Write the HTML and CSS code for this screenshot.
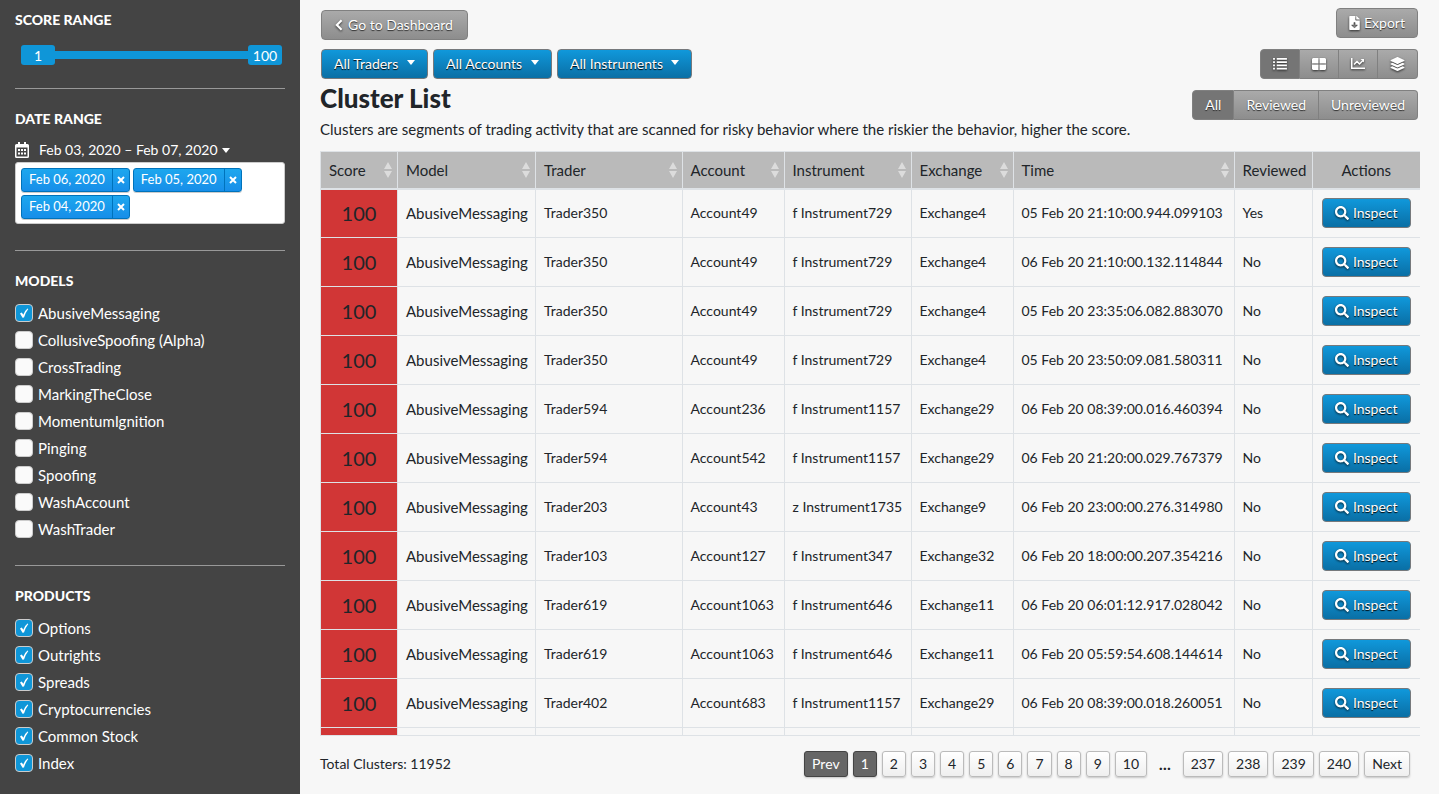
FILE: index.html
```html
<!DOCTYPE html>
<html lang="en">
<head>
<meta charset="utf-8">
<title>Cluster List</title>
<link rel="stylesheet" href="styles.css">
</head>
<body>
<svg class="sprite" aria-hidden="true">
  <symbol id="search" viewBox="0 0 512 512"><path d="M505 442.700L405.300 343c-4.500-4.500-10.600-7-17-7H372c27.600-35.300 44-79.700 44-128C416 93.100 322.900 0 208 0S0 93.100 0 208s93.100 208 208 208c48.300 0 92.700-16.400 128-44v16.300c0 6.400 2.500 12.500 7 17l99.700 99.700c9.400 9.400 24.600 9.400 33.900 0l28.300-28.300c9.400-9.400 9.400-24.600.1-34zM208 336c-70.700 0-128-57.200-128-128 0-70.700 57.200-128 128-128 70.700 0 128 57.200 128 128 0 70.700-57.200 128-128 128z"/></symbol>
  <symbol id="sort" viewBox="0 0 10 16"><path d="M5 0l4 7H1zM5 16l4-7H1z"/></symbol>
</svg>
<div class="app">
  <aside class="sidebar">
    <section class="block">
      <h2 class="block-title">Score Range</h2>
      <div class="slider">
        <input class="range" type="range" min="1" max="100" value="1" aria-label="Minimum score">
        <input class="range range-max" type="range" min="1" max="100" value="100" aria-label="Maximum score">
        <div class="range-values"><output>1</output><output>100</output></div>
      </div>
    </section>
    <section class="block">
      <h2 class="block-title">Date Range</h2>
      <button class="date-button" type="button">
        <svg class="calendar" viewBox="0 0 14 16"><path fill-rule="evenodd" d="M3 0h2v2h4V0h2v2h1.500A1.500 1.500 0 0 1 14 3.500v11a1.500 1.500 0 0 1-1.500 1.500h-11A1.500 1.500 0 0 1 0 14.500v-11A1.500 1.500 0 0 1 1.500 2H3zM1.500 5.500v9h11v-9z"/><path d="M3 7h2v2H3zM6 7h2v2H6zM9 7h2v2H9zM3 10.500h2v2H3zM6 10.500h2v2H6zM9 10.500h2v2H9z"/></svg>
        <span>Feb 03, 2020 – Feb 07, 2020</span><i class="caret"></i>
      </button>
      <div class="tags">
        <span class="tag"><span class="tag-text">Feb 06, 2020</span><button class="tag-remove" type="button" aria-label="Remove Feb 06, 2020"><svg viewBox="0 0 8 8"><path d="M1 1l6 6M7 1L1 7"/></svg></button></span>
        <span class="tag"><span class="tag-text">Feb 05, 2020</span><button class="tag-remove" type="button" aria-label="Remove Feb 05, 2020"><svg viewBox="0 0 8 8"><path d="M1 1l6 6M7 1L1 7"/></svg></button></span>
        <span class="tag"><span class="tag-text">Feb 04, 2020</span><button class="tag-remove" type="button" aria-label="Remove Feb 04, 2020"><svg viewBox="0 0 8 8"><path d="M1 1l6 6M7 1L1 7"/></svg></button></span>
      </div>
    </section>
    <section class="block">
      <h2 class="block-title">Models</h2>
      <div class="checks">
        <label class="check"><input type="checkbox" checked><span>AbusiveMessaging</span></label>
        <label class="check"><input type="checkbox"><span>CollusiveSpoofing (Alpha)</span></label>
        <label class="check"><input type="checkbox"><span>CrossTrading</span></label>
        <label class="check"><input type="checkbox"><span>MarkingTheClose</span></label>
        <label class="check"><input type="checkbox"><span>MomentumIgnition</span></label>
        <label class="check"><input type="checkbox"><span>Pinging</span></label>
        <label class="check"><input type="checkbox"><span>Spoofing</span></label>
        <label class="check"><input type="checkbox"><span>WashAccount</span></label>
        <label class="check"><input type="checkbox"><span>WashTrader</span></label>
      </div>
    </section>
    <section class="block">
      <h2 class="block-title">Products</h2>
      <div class="checks">
        <label class="check"><input type="checkbox" checked><span>Options</span></label>
        <label class="check"><input type="checkbox" checked><span>Outrights</span></label>
        <label class="check"><input type="checkbox" checked><span>Spreads</span></label>
        <label class="check"><input type="checkbox" checked><span>Cryptocurrencies</span></label>
        <label class="check"><input type="checkbox" checked><span>Common Stock</span></label>
        <label class="check"><input type="checkbox" checked><span>Index</span></label>
      </div>
    </section>
  </aside>
  <main class="main">
    <header class="toolbar">
      <div class="toolbar-left">
        <button class="btn gray back" type="button"><svg class="chevron" viewBox="0 0 9 14"><path d="M7.500 1.500L2 7l5.500 5.500"/></svg>Go to Dashboard</button>
        <div class="filters">
          <span class="select"><select class="btn blue" aria-label="Traders"><option>All Traders</option></select><i class="caret"></i></span>
          <span class="select"><select class="btn blue" aria-label="Accounts"><option>All Accounts</option></select><i class="caret"></i></span>
          <span class="select"><select class="btn blue" aria-label="Instruments"><option>All Instruments</option></select><i class="caret"></i></span>
        </div>
        <h1 class="title">Cluster List</h1>
      </div>
      <div class="toolbar-right">
        <button class="btn gray export" type="button"><svg class="file" viewBox="0 0 384 512"><path fill-rule="evenodd" d="M224 136V0H24C10.700 0 0 10.700 0 24v464c0 13.300 10.700 24 24 24h336c13.300 0 24-10.700 24-24V160H248c-13.200 0-24-10.800-24-24zm76.500 211.400l-96.400 95.700c-6.700 6.600-17.400 6.600-24 0l-96.400-95.700C73.400 337.300 80.500 320 94.800 320H160v-80c0-8.800 7.200-16 16-16h32c8.800 0 16 7.200 16 16v80h65.200c14.300 0 21.400 17.300 11.300 27.400zM377 105L279.100 7c-4.500-4.500-10.600-7-17-7H256v128h128v-6.100c0-6.300-2.500-12.400-7-16.900z"/></svg>Export</button>
        <div class="group">
          <button class="btn gray icon active" type="button" aria-label="List"><svg viewBox="0 0 15 13"><path d="M0 0h2v2H0zM4 0h11v2H4zM0 3.500h2v2H0zM4 3.500h11v2H4zM0 7h2v2H0zM4 7h11v2H4zM0 10.500h2v2H0zM4 10.500h11v2H4z"/></svg></button>
          <button class="btn gray icon" type="button" aria-label="Grid"><svg viewBox="0 0 14 12"><path d="M1 0h5.500v5.500H0V1zM7.500 0H13l1 1v4.500H7.500zM0 6.500h6.500V12H1l-1-1zM7.500 6.500H14V11l-1 1H7.500z"/></svg></button>
          <button class="btn gray icon" type="button" aria-label="Chart"><svg viewBox="0 0 14 12"><path d="M0 0h1.500v9.500H14V11H0z"/><path class="line" d="M3 6.500l3-3 2.500 2.500 3.200-3.200"/><path d="M9.500 1H13v3.500z"/></svg></button>
          <button class="btn gray icon" type="button" aria-label="Layers"><svg class="layers" viewBox="0 0 512 512"><path d="M12.400 148l232.900 105.700c6.800 3.100 14.500 3.100 21.300 0L499.600 148c16.600-7.500 16.600-32.500 0-40L266.700 2.300c-6.800-3.100-14.500-3.100-21.300 0L12.400 108c-16.600 7.500-16.600 32.500 0 40zm487.200 88.300l-58.100-26.300-161.600 73.300c-15.400 6.900-32.100 6.900-47.500 0L70.500 210l-58.100 26.300c-16.500 7.500-16.500 32.500 0 40l232.900 105.600c6.800 3.100 14.500 3.100 21.300 0l233-105.600c16.500-7.500 16.500-32.500 0-40zm0 127.800l-57.900-26.200-161.800 73.400c-15.400 6.900-32.100 6.900-47.500 0L70.300 337.900l-57.900 26.200c-16.500 7.500-16.500 32.500 0 40l232.900 105.600c6.800 3.100 14.500 3.100 21.300 0l233-105.600c16.500-7.500 16.500-32.500 0-40z"/></svg></button>
        </div>
        <div class="group">
          <button class="btn gray active" type="button">All</button>
          <button class="btn gray" type="button">Reviewed</button>
          <button class="btn gray" type="button">Unreviewed</button>
        </div>
      </div>
    </header>
    <p class="lead">Clusters are segments of trading activity that are scanned for risky behavior where the riskier the behavior, higher the score.</p>
    <div class="table-wrap">
      <table class="table">
        <colgroup><col class="c-score"><col class="c-model"><col><col class="c-account"><col class="c-instrument"><col class="c-exchange"><col class="c-time"><col class="c-reviewed"><col class="c-actions"></colgroup>
        <thead>
          <tr>
            <th><span class="th">Score<svg><use href="#sort"/></svg></span></th>
            <th><span class="th">Model<svg><use href="#sort"/></svg></span></th>
            <th><span class="th">Trader<svg><use href="#sort"/></svg></span></th>
            <th><span class="th">Account<svg><use href="#sort"/></svg></span></th>
            <th><span class="th">Instrument<svg><use href="#sort"/></svg></span></th>
            <th><span class="th">Exchange<svg><use href="#sort"/></svg></span></th>
            <th><span class="th">Time<svg><use href="#sort"/></svg></span></th>
            <th>Reviewed</th>
            <th class="center">Actions</th>
          </tr>
        </thead>
        <tbody>
          <tr><td class="score">100</td><td class="model">AbusiveMessaging</td><td>Trader350</td><td>Account49</td><td>f Instrument729</td><td>Exchange4</td><td>05 Feb 20 21:10:00.944.099103</td><td>Yes</td><td class="center"><button class="btn blue" type="button"><svg class="glass"><use href="#search"/></svg>Inspect</button></td></tr>
          <tr><td class="score">100</td><td class="model">AbusiveMessaging</td><td>Trader350</td><td>Account49</td><td>f Instrument729</td><td>Exchange4</td><td>06 Feb 20 21:10:00.132.114844</td><td>No</td><td class="center"><button class="btn blue" type="button"><svg class="glass"><use href="#search"/></svg>Inspect</button></td></tr>
          <tr><td class="score">100</td><td class="model">AbusiveMessaging</td><td>Trader350</td><td>Account49</td><td>f Instrument729</td><td>Exchange4</td><td>05 Feb 20 23:35:06.082.883070</td><td>No</td><td class="center"><button class="btn blue" type="button"><svg class="glass"><use href="#search"/></svg>Inspect</button></td></tr>
          <tr><td class="score">100</td><td class="model">AbusiveMessaging</td><td>Trader350</td><td>Account49</td><td>f Instrument729</td><td>Exchange4</td><td>05 Feb 20 23:50:09.081.580311</td><td>No</td><td class="center"><button class="btn blue" type="button"><svg class="glass"><use href="#search"/></svg>Inspect</button></td></tr>
          <tr><td class="score">100</td><td class="model">AbusiveMessaging</td><td>Trader594</td><td>Account236</td><td>f Instrument1157</td><td>Exchange29</td><td>06 Feb 20 08:39:00.016.460394</td><td>No</td><td class="center"><button class="btn blue" type="button"><svg class="glass"><use href="#search"/></svg>Inspect</button></td></tr>
          <tr><td class="score">100</td><td class="model">AbusiveMessaging</td><td>Trader594</td><td>Account542</td><td>f Instrument1157</td><td>Exchange29</td><td>06 Feb 20 21:20:00.029.767379</td><td>No</td><td class="center"><button class="btn blue" type="button"><svg class="glass"><use href="#search"/></svg>Inspect</button></td></tr>
          <tr><td class="score">100</td><td class="model">AbusiveMessaging</td><td>Trader203</td><td>Account43</td><td>z Instrument1735</td><td>Exchange9</td><td>06 Feb 20 23:00:00.276.314980</td><td>No</td><td class="center"><button class="btn blue" type="button"><svg class="glass"><use href="#search"/></svg>Inspect</button></td></tr>
          <tr><td class="score">100</td><td class="model">AbusiveMessaging</td><td>Trader103</td><td>Account127</td><td>f Instrument347</td><td>Exchange32</td><td>06 Feb 20 18:00:00.207.354216</td><td>No</td><td class="center"><button class="btn blue" type="button"><svg class="glass"><use href="#search"/></svg>Inspect</button></td></tr>
          <tr><td class="score">100</td><td class="model">AbusiveMessaging</td><td>Trader619</td><td>Account1063</td><td>f Instrument646</td><td>Exchange11</td><td>06 Feb 20 06:01:12.917.028042</td><td>No</td><td class="center"><button class="btn blue" type="button"><svg class="glass"><use href="#search"/></svg>Inspect</button></td></tr>
          <tr><td class="score">100</td><td class="model">AbusiveMessaging</td><td>Trader619</td><td>Account1063</td><td>f Instrument646</td><td>Exchange11</td><td>06 Feb 20 05:59:54.608.144614</td><td>No</td><td class="center"><button class="btn blue" type="button"><svg class="glass"><use href="#search"/></svg>Inspect</button></td></tr>
          <tr><td class="score">100</td><td class="model">AbusiveMessaging</td><td>Trader402</td><td>Account683</td><td>f Instrument1157</td><td>Exchange29</td><td>06 Feb 20 08:39:00.018.260051</td><td>No</td><td class="center"><button class="btn blue" type="button"><svg class="glass"><use href="#search"/></svg>Inspect</button></td></tr>
          <tr><td class="score"></td><td></td><td></td><td></td><td></td><td></td><td></td><td></td><td></td></tr>
        </tbody>
      </table>
    </div>
    <footer class="footer">
      <span>Total Clusters: 11952</span>
      <nav class="pages" aria-label="Pages">
        <button class="page dark" type="button">Prev</button>
        <button class="page dark" type="button">1</button>
        <button class="page" type="button">2</button>
        <button class="page" type="button">3</button>
        <button class="page" type="button">4</button>
        <button class="page" type="button">5</button>
        <button class="page" type="button">6</button>
        <button class="page" type="button">7</button>
        <button class="page" type="button">8</button>
        <button class="page" type="button">9</button>
        <button class="page" type="button">10</button>
        <span class="dots">…</span>
        <button class="page" type="button">237</button>
        <button class="page" type="button">238</button>
        <button class="page" type="button">239</button>
        <button class="page" type="button">240</button>
        <button class="page" type="button">Next</button>
      </nav>
    </footer>
  </main>
</div>
</body>
</html>
```
FILE: styles.css
```css
* { box-sizing: border-box; }
body { margin: 0; background: #f7f7f7; color: #212529; font: 15px/20px Lato, "Open Sans", sans-serif; }
button, select, input { font: inherit; color: inherit; margin: 0; }
h1, h2, p { margin: 0; }
.sprite { display: none; }
svg { display: block; flex: none; fill: currentColor; }
.app { display: flex; height: 100vh; overflow: hidden; }

.sidebar { flex: 0 0 300px; padding: 0 15px; background: #444; color: #fff; overflow: hidden; }
.block { padding: 20px 0 26px; border-bottom: 1px solid #999; }
.block:first-child { padding: 10px 0 22px; }
.block:last-child { border: 0; }
.block-title { font-size: 14px; line-height: 20px; font-weight: 900; text-transform: uppercase; }
.slider { display: grid; margin: 15px 3px 0 6px; }
.range { grid-area: 1 / 1; width: 100%; height: 20px; appearance: none; background: linear-gradient(#0f96d8, #0f96d8) center / 100% 8px no-repeat; }
.range::-webkit-slider-thumb { appearance: none; width: 34px; height: 20px; border-radius: 3px; background: #0f96d8; }
.range-max { background: none; pointer-events: none; }
.range-max::-webkit-slider-thumb { pointer-events: auto; }
.range-values { grid-area: 1 / 1; z-index: 1; display: flex; justify-content: space-between; pointer-events: none; font-size: 14px; line-height: 21px; }
.range-values output { width: 34px; text-align: center; }
.caret { display: inline-block; border: 4px solid transparent; border-top-width: 5px; border-top-color: currentColor; border-bottom: 0; }
.date-button { display: flex; align-items: center; margin-top: 11px; padding: 0; border: 0; background: none; font-size: 14px; line-height: 20px; }
.calendar { width: 14px; height: 16px; margin-right: 10px; }
.date-button .caret { margin-left: 4px; }
.tags { display: flex; flex-wrap: wrap; gap: 3px; align-content: flex-start; margin-top: 2px; padding: 5px 5px 4px; background: #fff; border: 1px solid #ccc; border-radius: 3px; }
.tag { display: flex; height: 24px; border: 1px solid #0073bb; border-radius: 3px; background: linear-gradient(#1da7ee, #178ee9); font-size: 13px; line-height: 21px; box-shadow: 0 1px 0 rgba(0, 0, 0, .2); }
.tag-text { padding: 0 7px; }
.tag-remove { display: grid; place-items: center; width: 17px; padding: 0; border: 0; border-left: 1px solid #0073bb; background: none; }
.tag-remove svg { width: 8px; height: 8px; stroke: #fff; stroke-width: 2; }
.checks { display: grid; gap: 7px; margin-top: 12px; }
.check { display: flex; align-items: center; gap: 5px; line-height: 20px; }
.check input { appearance: none; flex: none; width: 18px; height: 18px; border: 1px solid #ccc; border-radius: 4px; background: #fafafa; }
.check input:checked { background: #0f96d8 url('data:image/svg+xml,<svg xmlns="http://www.w3.org/2000/svg" viewBox="0 0 16 16"><path d="M4 8.500L5.800 7.500 7.300 9.800Q8.800 5.500 11.500 3.500L12.300 4Q9.500 7.500 8 12.500L6.500 12.700Z" fill="white"/></svg>') center / 16px 16px; }

.main { flex: 1; min-width: 0; display: flex; flex-direction: column; padding: 0 19px 0 20px; }
.toolbar { display: flex; justify-content: space-between; }
.toolbar-left { display: flex; flex-direction: column; align-items: flex-start; gap: 9px; padding: 10px 0 0 1px; }
.toolbar-right { display: flex; flex-direction: column; align-items: flex-end; gap: 11px; padding: 8px 2px 0 0; }
.filters { display: flex; gap: 5px; }
.btn { display: inline-flex; align-items: center; height: 30px; padding: 0 12px; border: 1px solid #888; border-radius: 4px; color: #fff; font-size: 14px; line-height: 20px; white-space: nowrap; text-shadow: 0 1px 1px #000; }
.btn svg { filter: drop-shadow(0 1px 1px rgba(0, 0, 0, .7)); }
.gray { background: linear-gradient(#aaa, #8d8d8d); border-color: #808080; text-shadow: 0 1px 1px rgba(0, 0, 0, .7); }
.blue { background: linear-gradient(#1098db, #0a6fa5); border-color: #76797c; }
.active { background: #757575; }
.back { padding: 0 14px 0 13px; }
.chevron { width: 8px; height: 12px; margin-right: 5px; }
.chevron path { fill: none; stroke: #fff; stroke-width: 2.500; }
.select { display: grid; align-items: center; justify-items: end; }
.select > * { grid-area: 1 / 1; }
.select select { appearance: none; padding-right: 28px; }
.select .caret { margin-right: 13px; margin-bottom: 4px; color: #fff; pointer-events: none; }
.title { font-size: 26px; line-height: 30px; font-weight: 900; margin: -5px 0 0 -1px; }
.file { width: 11px; height: 14px; margin-right: 4px; }
.group { display: flex; }
.group .btn { border-radius: 0; border-left-width: 0; }
.group .btn:first-child { border-left-width: 1px; border-radius: 4px 0 0 4px; }
.group .btn:last-child { border-radius: 0 4px 4px 0; }
.icon svg { width: 14px; height: 12px; }
.icon .layers { width: 15px; height: 14px; }
.line { fill: none; stroke: #fff; stroke-width: 1.500; }
.lead { margin-bottom: 13px; line-height: 18px; }

.table-wrap { flex: 1; min-height: 0; overflow: hidden; border-bottom: 1px solid #dee2e6; }
.table { width: 100%; table-layout: fixed; border-collapse: collapse; }
.c-score { width: 77px; }
.c-model { width: 138px; }
.c-account { width: 102px; }
.c-instrument { width: 127px; }
.c-exchange { width: 102px; }
.c-time { width: 221px; }
.c-reviewed { width: 78px; }
.c-actions { width: 108px; }
.table th, .table td { padding: 0 8px; border: 1px solid #dee2e6; text-align: left; font-weight: 400; white-space: nowrap; }
.table th:last-child, .table td:last-child { border-right: 0; }
.table th { height: 37px; background: #bababa; border-bottom-width: 2px; }
.table td { height: 49px; font-size: 14px; }
.table .center { text-align: center; }
.table .score { background: #d13636; font-size: 20px; text-align: center; }
.table .model { font-size: 15px; }
.th { display: flex; justify-content: space-between; align-items: center; }
.th svg { width: 10px; height: 16px; margin-right: -4px; color: #dcdcdc; }
.glass { width: 14px; height: 14px; margin-right: 4px; }

.footer { display: flex; flex: 0 0 58px; justify-content: space-between; align-items: center; padding: 0 10px 2px 0; font-size: 14px; }
.pages { display: flex; align-items: center; gap: 5px; }
.page { height: 26px; padding: 0 7px; border: 1px solid #bbb; border-radius: 3px; background: linear-gradient(#fff, #efefef); font-size: 14px; line-height: 20px; box-shadow: 0 1px 2px rgba(0, 0, 0, .2); }
.dark { background: #666; border-color: #444; color: #fff; }
.dots { padding: 0 7px; font-size: 15px; font-weight: 900; }
```
